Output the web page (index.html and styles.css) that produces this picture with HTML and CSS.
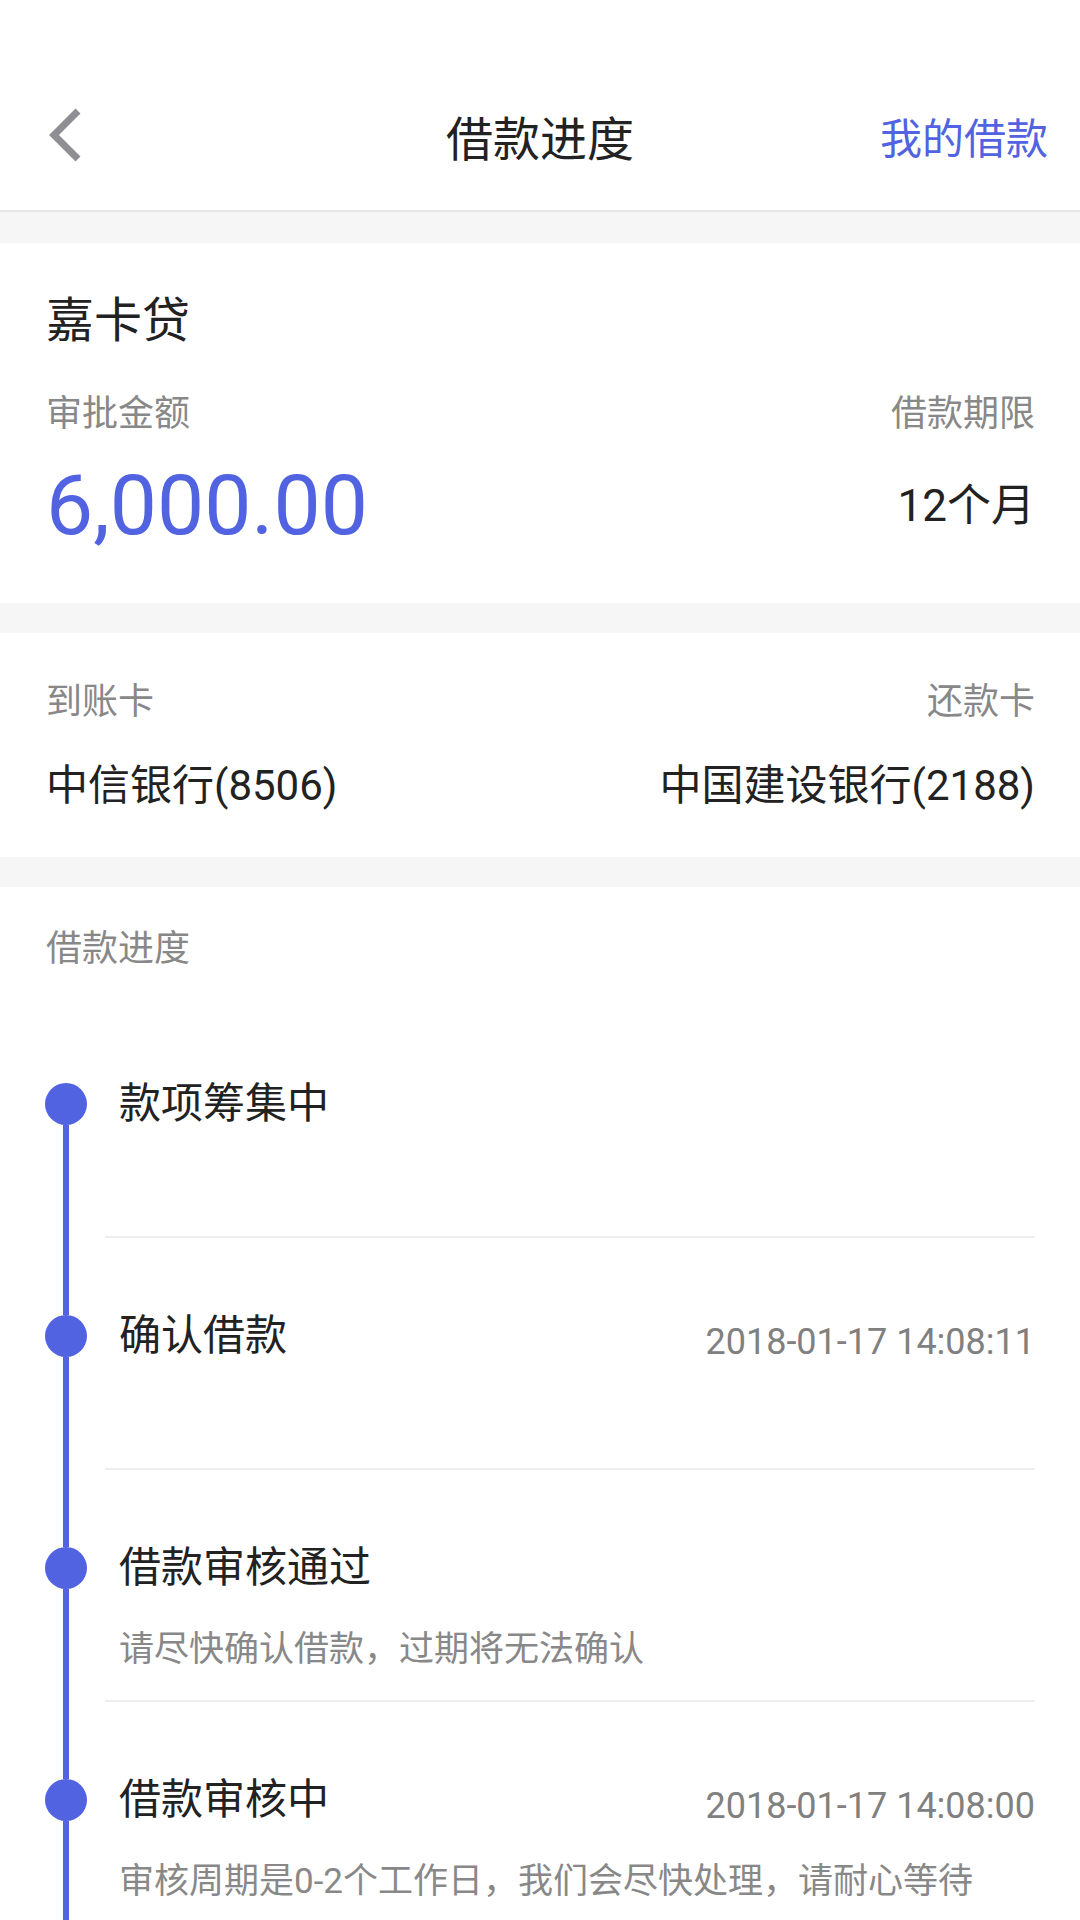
FILE: index.html
```html
<!DOCTYPE html>
<html lang="zh-CN">
<head>
    <meta charset="UTF-8">
    <meta name="viewport" content="width=device-width, initial-scale=1.0">
    <title>借款进度</title>
    <link rel="stylesheet" href="styles.css">
</head>
<body>
    <header class="header">
        <div class="nav">
            <div class="back">
                <svg width="44" height="64" viewBox="0 0 44 64">
                    <polyline points="34,8 10,32 34,56" fill="none" stroke="#8e8e93" stroke-width="7" stroke-linejoin="miter"/>
                </svg>
            </div>
            <div class="title">借款进度</div>
            <div class="nav-link">我的借款</div>
        </div>
    </header>

    <div class="gap"></div>

    <section class="card loan">
        <div class="loan-name">嘉卡贷</div>
        <div class="pair">
            <div class="col">
                <div class="label">审批金额</div>
                <div class="amount">6,000.00</div>
            </div>
            <div class="col right">
                <div class="label">借款期限</div>
                <div class="term">12个月</div>
            </div>
        </div>
    </section>

    <div class="gap"></div>

    <section class="card bank">
        <div class="pair">
            <div class="col">
                <div class="label">到账卡</div>
                <div class="bank-name">中信银行(8506)</div>
            </div>
            <div class="col right">
                <div class="label">还款卡</div>
                <div class="bank-name">中国建设银行(2188)</div>
            </div>
        </div>
    </section>

    <div class="gap"></div>

    <section class="progress">
        <div class="label progress-title">借款进度</div>
        <ul class="steps">
            <li class="step first">
                <div class="rail"><span class="line-top"></span><span class="dot"></span><span class="line-bottom"></span></div>
                <div class="step-body">
                    <div class="step-head">
                        <span class="step-name">款项筹集中</span>
                    </div>
                </div>
            </li>
            <li class="step">
                <div class="rail"><span class="line-top"></span><span class="dot"></span><span class="line-bottom"></span></div>
                <div class="step-body">
                    <div class="step-head">
                        <span class="step-name">确认借款</span>
                        <span class="step-time">2018-01-17 14:08:11</span>
                    </div>
                </div>
            </li>
            <li class="step">
                <div class="rail"><span class="line-top"></span><span class="dot"></span><span class="line-bottom"></span></div>
                <div class="step-body">
                    <div class="step-head">
                        <span class="step-name">借款审核通过</span>
                    </div>
                    <div class="step-desc">请尽快确认借款，过期将无法确认</div>
                </div>
            </li>
            <li class="step">
                <div class="rail"><span class="line-top"></span><span class="dot"></span><span class="line-bottom"></span></div>
                <div class="step-body">
                    <div class="step-head">
                        <span class="step-name">借款审核中</span>
                        <span class="step-time">2018-01-17 14:08:00</span>
                    </div>
                    <div class="step-desc">审核周期是0-2个工作日，我们会尽快处理，请耐心等待</div>
                </div>
            </li>
        </ul>
    </section>
</body>
</html>
```

FILE: styles.css
```css
* {
    box-sizing: border-box;
}

body {
    margin: 0;
    font-family: Roboto, "Noto Sans CJK SC", sans-serif;
    color: #222222;
    background-color: #ffffff;
}

.header {
    padding-top: 60px;
    border-bottom: 2px solid #e6e6e6;
}

.nav {
    height: 150px;
    display: grid;
    grid-template-columns: 1fr auto 1fr;
    align-items: center;
}

.back {
    padding-left: 44px;
    display: flex;
}

.title {
    font-size: 47px;
    color: #222222;
}

.nav-link {
    justify-self: end;
    padding-right: 32px;
    font-size: 42px;
    color: #5163e0;
}

.gap {
    height: 30px;
    background-color: #f6f6f6;
}

.header + .gap {
    height: 31px;
}

.card {
    padding: 0 45px 0 46px;
}

.pair {
    display: flex;
    justify-content: space-between;
}

.col.right {
    text-align: right;
}

.label {
    font-size: 36px;
    line-height: 44px;
    color: #888888;
}

.loan {
    padding-top: 50px;
    padding-bottom: 55px;
}

.loan-name {
    font-size: 48px;
    line-height: 56px;
    margin-bottom: 43px;
}

.amount {
    margin-top: 28px;
    font-size: 84px;
    line-height: 84px;
    color: #5163e0;
}

.term {
    margin-top: 28px;
    font-size: 44px;
    line-height: 84px;
}

.bank {
    padding-top: 47px;
    padding-bottom: 45px;
}

.bank-name {
    margin-top: 36px;
    font-size: 42px;
    line-height: 52px;
}

.progress {
    padding: 40px 45px 0 0;
}

.progress-title {
    padding-left: 46px;
    margin-bottom: 35px;
}

.steps {
    list-style: none;
    margin: 0;
    padding: 0;
}

.step {
    display: grid;
    grid-template-columns: 105px 1fr;
}

.rail {
    display: flex;
    flex-direction: column;
    align-items: center;
    padding-left: 27px;
}

.line-top {
    width: 6px;
    height: 77px;
    background-color: #5163e0;
}

.first .line-top {
    visibility: hidden;
}

.dot {
    width: 42px;
    height: 42px;
    border-radius: 50%;
    background-color: #5163e0;
}

.line-bottom {
    width: 6px;
    flex: 1;
    background-color: #5163e0;
}

.step-body {
    min-height: 232px;
    padding: 73px 0 28px 14px;
    border-bottom: 2px solid #eeeeee;
}

.step-head {
    height: 50px;
    display: flex;
    justify-content: space-between;
    align-items: flex-end;
}

.step-name {
    font-size: 42px;
    line-height: 50px;
}

.step-time {
    font-size: 36px;
    line-height: 38px;
    color: #808080;
}

.step-desc {
    margin-top: 35px;
    font-size: 35px;
    line-height: 44px;
    color: #888888;
}
```
